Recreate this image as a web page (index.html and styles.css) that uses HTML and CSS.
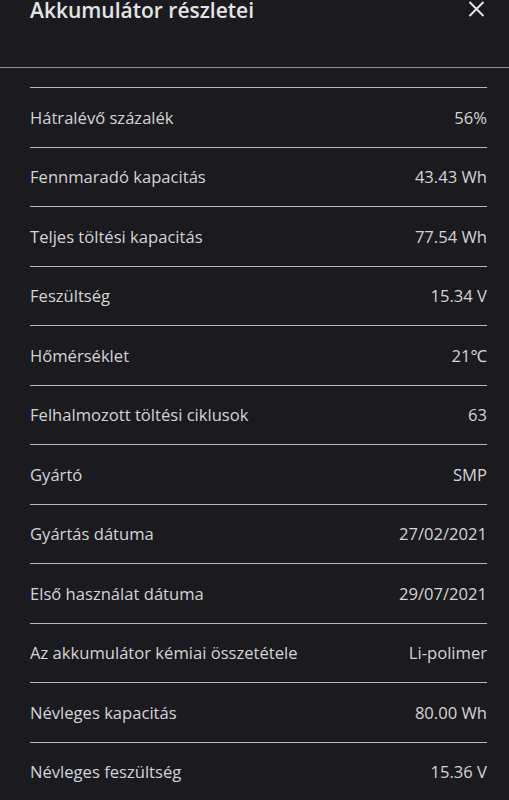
FILE: index.html
```html
<!DOCTYPE html>
<html lang="hu">
<head>
    <meta charset="UTF-8">
    <meta name="viewport" content="width=device-width, initial-scale=1.0">
    <title>Akkumulátor részletei</title>
    <link rel="stylesheet" href="styles.css">
</head>
<body>
    <div class="panel">
        <div class="panel-header">
            <h1 class="panel-title">Akkumulátor részletei</h1>
            <button class="close-btn" aria-label="Bezárás">
                <svg width="17" height="16" viewBox="0 0 17 16"><path d="M1.5 1 L15.5 15 M15.5 1 L1.5 15" stroke="#e6e6e6" stroke-width="2" fill="none"/></svg>
            </button>
        </div>
        <ul class="details">
            <li><span>Hátralévő százalék</span><span>56%</span></li>
            <li><span>Fennmaradó kapacitás</span><span>43.43 Wh</span></li>
            <li><span>Teljes töltési kapacitás</span><span>77.54 Wh</span></li>
            <li><span>Feszültség</span><span>15.34 V</span></li>
            <li><span>Hőmérséklet</span><span>21℃</span></li>
            <li><span>Felhalmozott töltési ciklusok</span><span>63</span></li>
            <li><span>Gyártó</span><span>SMP</span></li>
            <li><span>Gyártás dátuma</span><span>27/02/2021</span></li>
            <li><span>Első használat dátuma</span><span>29/07/2021</span></li>
            <li><span>Az akkumulátor kémiai összetétele</span><span>Li-polimer</span></li>
            <li><span>Névleges kapacitás</span><span>80.00 Wh</span></li>
            <li><span>Névleges feszültség</span><span>15.36 V</span></li>
        </ul>
    </div>
</body>
</html>
```

FILE: styles.css
```css
body { margin: 0; background-color: #1b1a1f; color: #d4d4d6; font-family: "Open Sans", "Noto Sans", sans-serif; overflow: hidden; }
.panel { width: 509px; height: 800px; overflow: hidden; }
.panel-header {
    display: flex;
    justify-content: space-between;
    align-items: flex-start;
    height: 68px;
    padding: 0 22px 0 30px;
    border-bottom: 1px solid #8e8e92;
    box-sizing: border-box;
}
.panel-title { margin: 0; font-size: 21px; line-height: 21px; font-weight: 600; color: #e4e4e6; }
.close-btn { background: none; border: none; padding: 0; margin: 1px 2px 0 0; cursor: pointer; line-height: 0; }
.details { list-style: none; margin: 19px 22px 0 30px; padding: 0; }
.details li {
    display: flex;
    justify-content: space-between;
    align-items: center;
    height: 59.5px;
    border-top: 1px solid #b8b8bc;
    box-sizing: border-box;
    font-size: 16.6px;
}
```
